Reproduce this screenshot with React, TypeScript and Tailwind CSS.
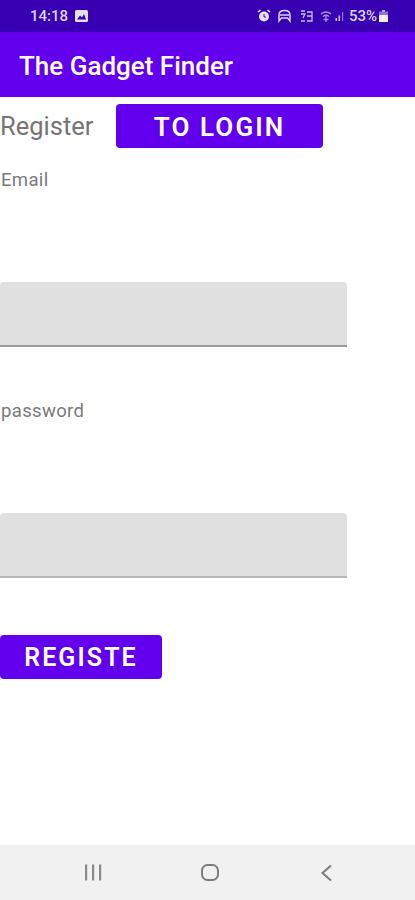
const roboto = { fontFamily: 'Roboto, sans-serif' };

function StatusBar() {
  return (
    <div className="flex h-8 items-center bg-[#3700b3] pl-[30px] pr-[27px] text-[#dcd3f2]">
      <span className="text-[15px] font-medium leading-none">14:18</span>
      <svg className="ml-[7px]" width="13" height="12" viewBox="0 0 13 12">
        <rect x="0" y="0" width="13" height="12" rx="1.5" fill="#e6e0f5" />
        <path d="M2 9.5 L5 5.5 L7 7.5 L9 4 L11 9.5 Z" fill="#3700b3" />
      </svg>
      <div className="ml-auto flex items-center">
        {/* alarm */}
        <svg width="14" height="14" viewBox="0 0 14 14">
          <circle cx="7" cy="7.5" r="5" fill="#e6e0f5" />
          <path d="M1 3 L3.5 1 M13 3 L10.5 1" stroke="#e6e0f5" strokeWidth="1.6" />
          <path d="M7 5 V8 H9" stroke="#3700b3" strokeWidth="1" fill="none" />
        </svg>
        {/* car / game */}
        <svg className="ml-[6px]" width="15" height="14" viewBox="0 0 15 14" fill="none" stroke="#dcd3f2" strokeWidth="1.5">
          <path d="M2 12 V6 Q2 1.5 7.5 1.5 Q13 1.5 13 6 V12 L10.5 9 H4.5 Z" />
          <path d="M3 6 H12" />
        </svg>
        {/* wifi calling */}
        <svg className="ml-[8px]" width="13" height="13" viewBox="0 0 13 13" fill="none" stroke="#c9bdeb" strokeWidth="1.3">
          <path d="M1 1 H5 M1 4 H5 L3 8 M1 11 H5 M7 2 H12 V11 H7 M7 6 H12" />
        </svg>
        <svg className="ml-[7px]" width="12" height="12" viewBox="0 0 12 12" fill="none" stroke="#a593dd" strokeWidth="1.3">
          <path d="M1 4 Q6 0 11 4 M3 6.5 Q6 4 9 6.5 M6 5 V12 M3.5 9.5 H8.5" />
        </svg>
        {/* signal */}
        <svg className="ml-[3px]" width="9" height="11" viewBox="0 0 9 11">
          <rect x="0.5" y="7" width="1.6" height="3" fill="#c9bdeb" />
          <rect x="3.5" y="4.5" width="1.6" height="5.5" fill="#c9bdeb" />
          <rect x="7" y="1" width="1.2" height="9" fill="#8d76d3" />
        </svg>
        <span className="ml-[5px] text-[15px] font-medium leading-none">53%</span>
        <svg className="ml-[2px]" width="9" height="12" viewBox="0 0 9 12">
          <rect x="3" y="0" width="3" height="2" fill="#c9bdeb" />
          <rect x="0" y="1.5" width="9" height="4" fill="#8d76d3" />
          <rect x="0" y="5" width="9" height="7" rx="0.5" fill="#f0ecfa" />
        </svg>
      </div>
    </div>
  );
}

function Field({ label, labelClass, boxClass }: { label: string; labelClass: string; boxClass: string }) {
  return (
    <div className={labelClass}>
      <div className="pl-px text-[18.5px] leading-5 tracking-[0.35px] text-[#7a7a7a]">{label}</div>
      <div className={`h-[65px] w-[347px] rounded-t-[4px] border-b-[2px] bg-[#e0e0e0] ${boxClass}`} />
    </div>
  );
}

export default function App() {
  return (
    <div className="flex h-[900px] w-[415px] flex-col overflow-hidden bg-white" style={roboto}>
      <StatusBar />
      <div className="flex h-[65px] items-center bg-[#6200ee] pl-[19px] pt-[3px] text-[26px] font-medium text-white">
        The Gadget Finder
      </div>
      <div className="flex-1">
        <div className="mt-[7px] flex items-center">
          <span className="w-[93px] text-[25.5px] leading-7 text-[#757575]">Register</span>
          <div className="ml-[23px] flex h-[44px] w-[207px] items-center justify-center rounded-[4px] bg-[#6200ee] pt-[2px] text-[26px] font-semibold tracking-[2.1px] text-white">
            TO LOGIN
          </div>
        </div>
        <Field label="Email" labelClass="mt-[22px] [&>div:last-child]:mt-[92px]" boxClass="border-[#9a9a9a]" />
        <Field label="password" labelClass="mt-[54px] [&>div:last-child]:mt-[92px]" boxClass="border-[#b5b5b5]" />
        <div className="mt-[57px] flex h-[44px] w-[162px] items-center justify-center rounded-[4px] bg-[#6200ee] pt-px text-[25px] font-semibold tracking-[2.1px] text-white">
          REGISTE
        </div>
      </div>
      <div className="flex h-[55px] items-center bg-[#f1f1f1]">
        <svg className="ml-[84px]" width="19" height="17" viewBox="0 0 19 17" fill="#8a8a8a">
          <rect x="1" y="0.5" width="2.2" height="16" />
          <rect x="8" y="0.5" width="2.2" height="16" />
          <rect x="15" y="0.5" width="2.2" height="16" />
        </svg>
        <svg className="ml-[97px]" width="20" height="19" viewBox="0 0 20 19" fill="none" stroke="#7c7c7c" strokeWidth="2">
          <rect x="2" y="2" width="16" height="15" rx="5.5" />
        </svg>
        <svg className="ml-[100px]" width="13" height="18" viewBox="0 0 13 18" fill="none" stroke="#7c7c7c" strokeWidth="2">
          <path d="M11 1.5 L2.5 9 L11 16.5" />
        </svg>
      </div>
    </div>
  );
}
